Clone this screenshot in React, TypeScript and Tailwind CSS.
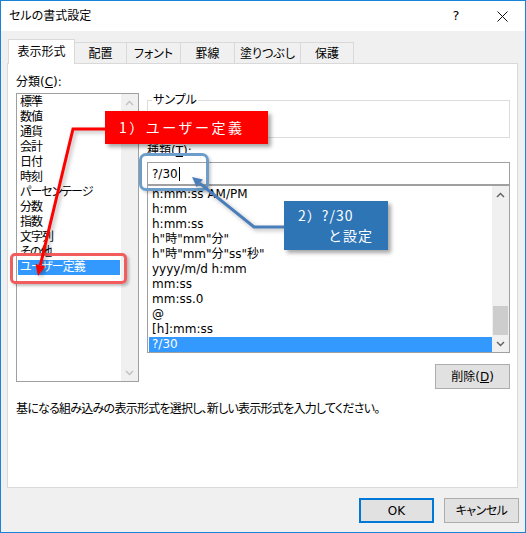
import React from "react";

const categories = [
  "標準",
  "数値",
  "通貨",
  "会計",
  "日付",
  "時刻",
  "パーセンテージ",
  "分数",
  "指数",
  "文字列",
  "その他",
  "ユーザー定義",
];

const formats = [
  "h:mm:ss AM/PM",
  "h:mm",
  "h:mm:ss",
  'h"時"mm"分"',
  'h"時"mm"分"ss"秒"',
  "yyyy/m/d h:mm",
  "mm:ss",
  "mm:ss.0",
  "@",
  "[h]:mm:ss",
  "?/30",
];

const tabs = [
  { label: "配置", w: "w-[53px]" },
  { label: "フォント", w: "w-[55px]" },
  { label: "罫線", w: "w-[55px]" },
  { label: "塗りつぶし", w: "w-[67px]" },
  { label: "保護", w: "w-[54px]" },
];

function Chevron({ up, color }: { up?: boolean; color: string }) {
  return (
    <svg width="9" height="6" viewBox="0 0 9 6">
      <path
        d={up ? "M1 5 L4.5 1.5 L8 5" : "M1 1 L4.5 4.5 L8 1"}
        fill="none"
        stroke={color}
        strokeWidth="1.4"
      />
    </svg>
  );
}

function ScrollBar({ enabled }: { enabled: boolean }) {
  const c = enabled ? "#606060" : "#c0c0c0";
  return (
    <div className="w-[17px] h-full bg-[#f0f0f0] flex flex-col">
      <div className="h-[17px] flex items-center justify-center">
        <Chevron up color={c} />
      </div>
      <div className="flex-1 flex flex-col justify-end">
        {enabled && <div className="h-[29px] mx-[1px] bg-[#cdcdcd]" />}
      </div>
      <div className="h-[17px] flex items-center justify-center">
        <Chevron color={c} />
      </div>
    </div>
  );
}

export default function App() {
  return (
    <div className="relative w-[526px] h-[533px] border border-[#1883d7] bg-[#f0f0f0] flex flex-col text-[12px] text-black font-['DejaVu_Sans','Noto_Sans_CJK_JP',sans-serif] [font-feature-settings:'palt'] overflow-hidden">
      {/* title bar */}
      <div className="h-[30px] bg-white flex items-center pl-[8px]">
        <span>セルの書式設定</span>
        <div className="ml-auto flex h-full">
          <div className="w-[46px] h-full flex items-center justify-center text-[13px]">?</div>
          <div className="w-[46px] h-full flex items-center justify-center">
            <svg width="11" height="11" viewBox="0 0 11 11">
              <path d="M0.5 0.5 L10.5 10.5 M10.5 0.5 L0.5 10.5" stroke="#111" strokeWidth="1" />
            </svg>
          </div>
        </div>
      </div>

      {/* tabs */}
      <div className="mt-[8px] pl-[7px] h-[25px] flex items-end">
        <div className="relative z-10 w-[67px] h-[25px] bg-white border border-b-0 border-[#d9d9d9] flex items-center justify-center">
          表示形式
        </div>
        {tabs.map((t) => (
          <div
            key={t.label}
            className={`${t.w} -ml-px h-[22px] bg-[#f0f0f0] border border-b-0 border-[#d9d9d9] flex items-center justify-center`}
          >
            {t.label}
          </div>
        ))}
      </div>

      {/* panel */}
      <div className="-mt-px ml-[6px] w-[511px] h-[425px] bg-white border border-[#d9d9d9] pt-[11px] pl-[8px] flex flex-col">
        <div className="flex">
          {/* left column */}
          <div className="w-[123px] flex flex-col">
            <div className="h-[15px] leading-[15px]">
              分類(<span className="underline">C</span>):
            </div>
            <div className="mt-[3px] h-[289px] border border-[#a0a0a0] flex">
              <div className="w-[103px] pt-[1px] pl-[1px] flex flex-col">
                {categories.map((c) => (
                  <div
                    key={c}
                    className={`h-[15px] leading-[15px] pl-[2px] tracking-[-1px] whitespace-nowrap ${
                      c === "ユーザー定義" ? "bg-[#3399ff] text-white" : ""
                    }`}
                  >
                    {c}
                  </div>
                ))}
              </div>
              <div className="ml-auto h-full">
                <ScrollBar enabled={false} />
              </div>
            </div>
          </div>

          {/* right column */}
          <div className="ml-[8px] w-[363px] flex flex-col">
            <div className="relative mt-[25px] h-[38px] border border-[#dcdcdc]">
              <span className="absolute left-[4px] -top-[8px] bg-white px-[1px] leading-[15px]">サンプル</span>
            </div>
            <div className="mt-[6px] h-[15px] leading-[15px]">
              種類(<span className="underline">T</span>):
            </div>
            <div className="mt-[3px] h-[23px] border border-[#a0a0a0] flex items-center pl-[4px]">
              <span>?/30</span>
              <span className="ml-[1px] w-px h-[14px] bg-black" />
            </div>
            <div className="h-[168px] border border-[#a0a0a0] flex">
              <div className="w-[344px] pt-[1px] pl-[1px] flex flex-col">
                {formats.map((f) => (
                  <div
                    key={f}
                    className={`h-[15px] leading-[15px] pl-[3px] whitespace-nowrap ${
                      f === "?/30" ? "bg-[#3399ff] text-white" : ""
                    }`}
                  >
                    {f}
                  </div>
                ))}
              </div>
              <div className="h-full">
                <ScrollBar enabled />
              </div>
            </div>
            <div className="self-end mt-[11px] w-[75px] h-[25px] bg-[#e1e1e1] border border-[#adadad] flex items-center justify-center">
              削除(<span className="underline">D</span>)
            </div>
          </div>
        </div>
        <div className="mt-[13px] h-[15px] leading-[15px] tracking-[-0.75px] whitespace-nowrap">
          基になる組み込みの表示形式を選択し、新しい表示形式を入力してください。
        </div>
      </div>

      {/* footer buttons */}
      <div className="mt-[10px] pr-[6px] flex justify-end gap-[10px]">
        <div className="w-[75px] h-[25px] bg-[#e1e1e1] border-2 border-[#0078d7] flex items-center justify-center">
          OK
        </div>
        <div className="w-[75px] h-[25px] bg-[#e1e1e1] border border-[#adadad] flex items-center justify-center tracking-[-0.5px]">
          キャンセル
        </div>
      </div>

      {/* annotations */}
      <div className="absolute left-[9px] top-[252px] w-[117px] h-[31px] rounded-[5px] border-[3px] border-[#f25c5c] shadow-[2px_2px_3px_rgba(0,0,0,0.25)]" />
      <div className="absolute left-[138px] top-[152px] w-[70px] h-[38px] rounded-[7px] border-[3px] border-[#6d9dcb] shadow-[2px_2px_3px_rgba(0,0,0,0.2)]" />

      <svg
        className="absolute -left-px -top-px pointer-events-none drop-shadow-[2px_2px_2px_rgba(0,0,0,0.3)]"
        width="526"
        height="533"
        viewBox="0 0 526 533"
      >
        <polyline points="105,129 73,129 40.3,265.3" fill="none" stroke="#ff0000" strokeWidth="3" />
        <polygon points="38,276 45.2,266.4 35.5,264.1" fill="#ff0000" />
        <polyline points="284,227 254,227 199.8,183.3" fill="none" stroke="#4a7ebb" strokeWidth="3" />
        <polygon points="192,177 202.9,179.4 196.7,187.2" fill="#4a7ebb" />
      </svg>

      <div className="absolute left-[104px] top-[110px] w-[163px] h-[33px] bg-[#ff0000] text-white text-[14px] tracking-[2.5px] [font-feature-settings:normal] font-['Noto_Sans_CJK_JP',sans-serif] flex items-center pl-[14px] shadow-[3px_3px_4px_rgba(0,0,0,0.35)]">
        1）ユーザー定義
      </div>
      <div className="absolute left-[283px] top-[200px] w-[104px] h-[49px] bg-[#2e75b6] text-white text-[14px] tracking-[1px] [font-feature-settings:normal] font-['Noto_Sans_CJK_JP',sans-serif] leading-[20px] pt-[4px] pl-[14px] shadow-[3px_3px_4px_rgba(0,0,0,0.35)]">
        <div>2）?/30</div>
        <div className="pl-[30px]">と設定</div>
      </div>
    </div>
  );
}
